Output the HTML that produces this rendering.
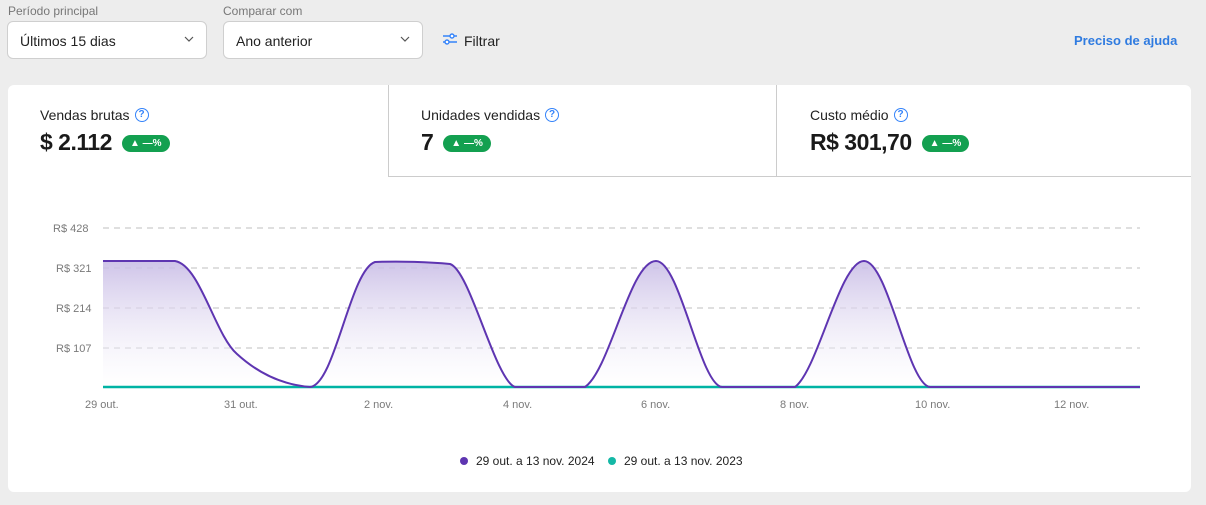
<!DOCTYPE html>
<html><head><meta charset="utf-8"><style>
*{box-sizing:border-box;margin:0;padding:0}
body{width:1206px;height:505px;background:#ededed;font-family:"Liberation Sans",sans-serif;position:relative;overflow:hidden;color:#1a1a1a}
.lbl{position:absolute;top:4px;font-size:12px;color:#777}
.sel{position:absolute;top:21px;height:38px;background:#fff;border:1px solid #cfcfcf;border-radius:6px;font-size:14px;padding:11px 12px;color:#222}
.sel svg{position:absolute;right:12px;top:14px}
.card{position:absolute;left:8px;top:85px;width:1183px;height:407px;background:#fff;border-radius:6px}
.tab{position:absolute;top:0;height:92px}
.t{position:absolute;top:22px;font-size:14px;color:#222}
.v{position:absolute;top:44px;font-size:23px;font-weight:bold;color:#1a1a1a;letter-spacing:-0.5px}
.b{display:inline-block;vertical-align:4px;margin-left:10px;background:#13a050;color:#fff;font-size:10px;font-weight:bold;border-radius:9px;padding:3px 8px;letter-spacing:0}
.q{display:inline-block;width:14px;height:14px;border:1.5px solid #3483fa;border-radius:50%;color:#3483fa;font-size:10px;text-align:center;line-height:11px;margin-left:5px;vertical-align:1px;font-weight:bold;position:relative;top:-2px}
.ax{position:absolute;font-size:11px;color:#7a7a7a}
</style></head><body>
<div class="lbl" style="left:8px">Período principal</div>
<div class="sel" style="left:7px;width:200px">Últimos 15 dias<svg width="10" height="6"><path d="M1 1l4 4 4-4" fill="none" stroke="#555" stroke-width="1.2"/></svg></div>
<div class="lbl" style="left:223px">Comparar com</div>
<div class="sel" style="left:223px;width:200px">Ano anterior<svg width="10" height="6"><path d="M1 1l4 4 4-4" fill="none" stroke="#555" stroke-width="1.2"/></svg></div>
<svg style="position:absolute;left:442px;top:32px" width="16" height="14"><g stroke="#3483fa" stroke-width="1.4" fill="none"><path d="M1 4h14M1 10h14"/><circle cx="10" cy="4" r="2" fill="#fff"/><circle cx="5" cy="10" r="2" fill="#fff"/></g></svg>
<div style="position:absolute;left:464px;top:33px;font-size:14px;color:#222">Filtrar</div>
<div style="position:absolute;left:1074px;top:33px;font-size:13px;color:#2f7be0;font-weight:bold">Preciso de ajuda</div>
<div class="card">
 <div class="tab" style="left:0;width:381px"><div class="t" style="left:32px">Vendas brutas<span class="q">?</span></div><div class="v" style="left:32px">$ 2.112<span class="b">▲ —%</span></div></div>
 <div class="tab" style="left:380px;width:389px;border-left:1px solid #ccc;border-bottom:1px solid #ccc"><div class="t" style="left:32px">Unidades vendidas<span class="q">?</span></div><div class="v" style="left:32px">7<span class="b">▲ —%</span></div></div>
 <div class="tab" style="left:768px;width:415px;border-left:1px solid #ccc;border-bottom:1px solid #ccc"><div class="t" style="left:33px">Custo médio<span class="q">?</span></div><div class="v" style="left:33px">R$ 301,70<span class="b">▲ —%</span></div></div>
</div>
<svg style="position:absolute;left:0;top:0" width="1206" height="505">
<defs><linearGradient id="g" x1="0" y1="0" x2="0" y2="1"><stop offset="0" stop-color="#c9bde6" stop-opacity=".9"/><stop offset="1" stop-color="#fff" stop-opacity=".3"/></linearGradient></defs>
<g stroke="#ccc" stroke-dasharray="6 5" stroke-width="1.2"><path d="M103 228H1140M103 268H1140M103 308H1140M103 348H1140"/></g>
<path d="M103 261H175C200 265 215 335 237 354C260 375 285 385 310 387C335 385 350 270 375 262C400 261 430 262 450 264C470 270 495 380 515 387H585C610 370 630 261 656 261C680 261 700 385 722 387H795C818 370 840 261 864 261C888 261 908 385 930 387H1140V387H103Z" fill="url(#g)"/>
<path d="M103 387H1140" stroke="#00b3a4" stroke-width="2.5"/>
<path d="M103 261H175C200 265 215 335 237 354C260 375 285 385 310 387C335 385 350 270 375 262C400 261 430 262 450 264C470 270 495 380 515 387H585C610 370 630 261 656 261C680 261 700 385 722 387H795C818 370 840 261 864 261C888 261 908 385 930 387H1140" fill="none" stroke="#5e35b1" stroke-width="2"/>
<circle cx="464" cy="461" r="4" fill="#5e35b1"/><circle cx="612" cy="461" r="4" fill="#14b8a6"/>
</svg>
<div class="ax" style="left:53px;top:223px">R$ 428</div>
<div class="ax" style="left:56px;top:263px">R$ 321</div>
<div class="ax" style="left:56px;top:303px">R$ 214</div>
<div class="ax" style="left:56px;top:343px">R$ 107</div>
<div class="ax" style="left:85px;top:399px">29 out.</div>
<div class="ax" style="left:224px;top:399px">31 out.</div>
<div class="ax" style="left:364px;top:399px">2 nov.</div>
<div class="ax" style="left:503px;top:399px">4 nov.</div>
<div class="ax" style="left:641px;top:399px">6 nov.</div>
<div class="ax" style="left:780px;top:399px">8 nov.</div>
<div class="ax" style="left:915px;top:399px">10 nov.</div>
<div class="ax" style="left:1054px;top:399px">12 nov.</div>
<div style="position:absolute;left:476px;top:454px;font-size:12px;color:#222">29 out. a 13 nov. 2024</div>
<div style="position:absolute;left:624px;top:454px;font-size:12px;color:#222">29 out. a 13 nov. 2023</div>
</body></html>
